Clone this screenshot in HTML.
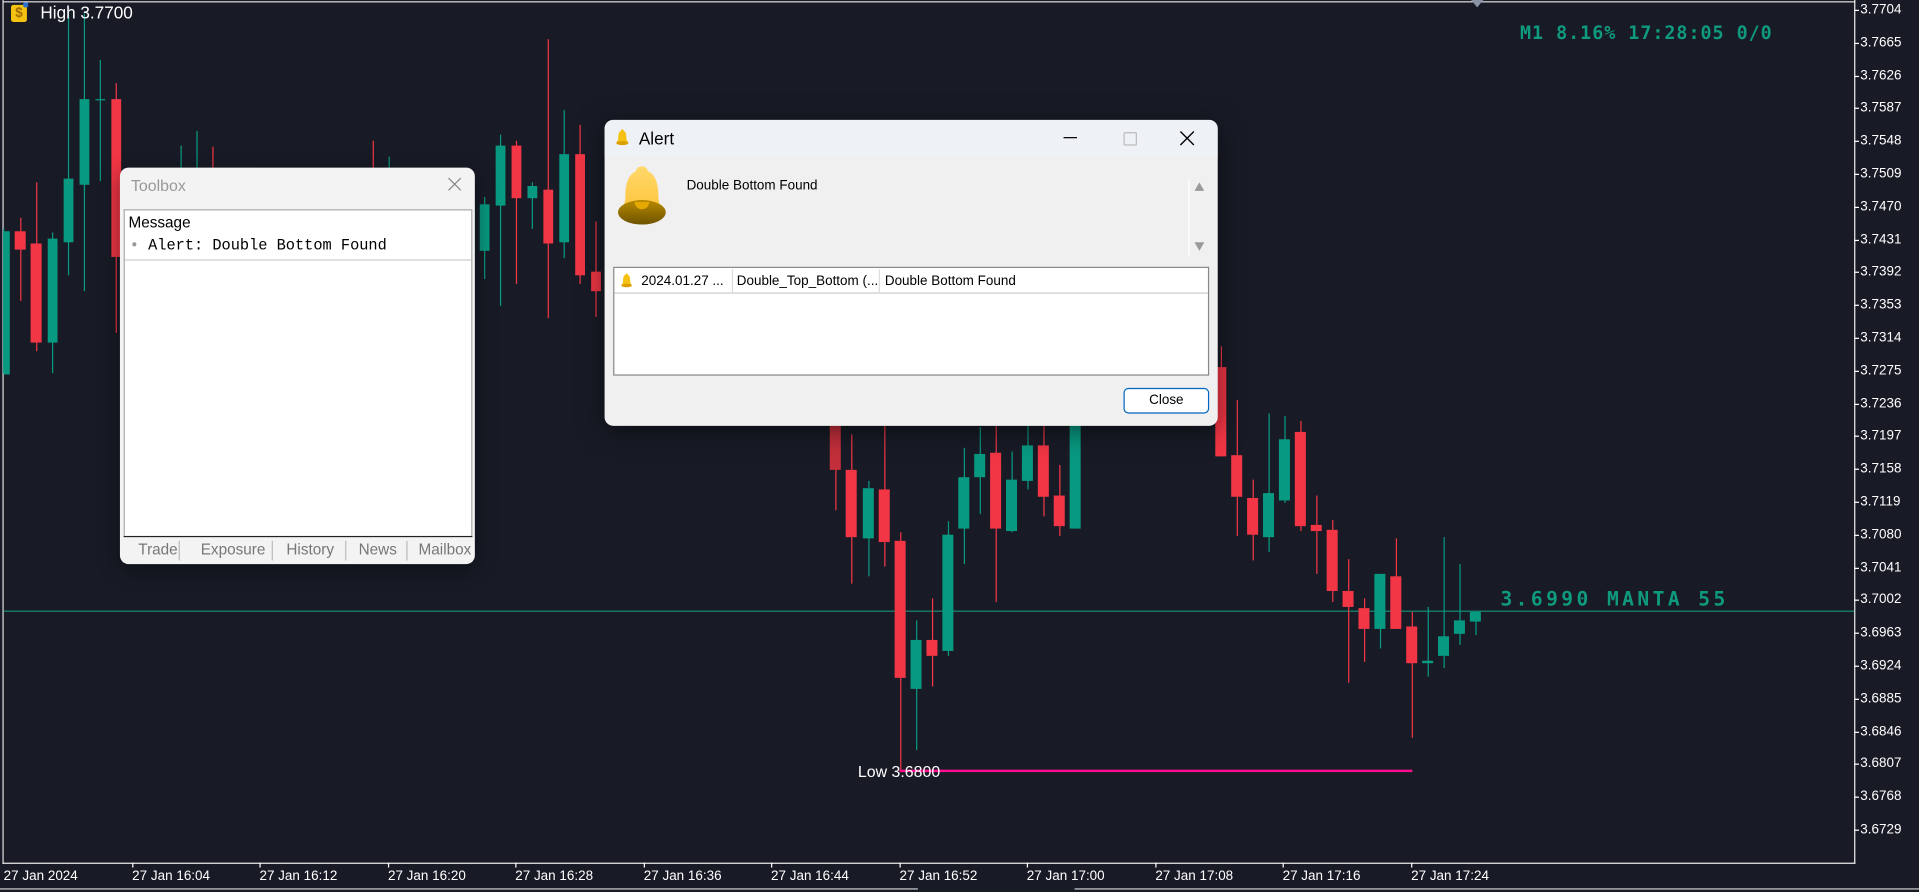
<!DOCTYPE html>
<html><head><meta charset="utf-8">
<style>
html,body{margin:0;padding:0;background:#181b26;overflow:hidden;width:1919px;height:892px}
#w{position:absolute;left:0;top:0;width:1568px;height:729px;transform:scale(1.22385,1.2236);transform-origin:0 0;background:#181b26;font-family:"Liberation Sans",sans-serif}
.abs{position:absolute}
.pl{position:absolute;left:1520px;color:#fff;font-size:11px;line-height:12px}
.tl{position:absolute;top:710px;color:#fff;font-size:11px;white-space:nowrap}
.tab{position:absolute;font-size:12.5px;color:#777}
.sep{position:absolute;width:1px;height:16px;background:#bbb}
</style></head><body>
<div id="w">
<svg class="abs" style="left:0;top:0" width="1568" height="729">
<rect x="2" y="0" width="1" height="706" fill="#ddd"/>
<rect x="2" y="1" width="1514" height="1" fill="#ddd"/>
<rect x="1515" y="0" width="1" height="706" fill="#eee"/>
<rect x="2" y="705" width="1514" height="1" fill="#eee"/>
<rect x="0" y="726" width="750" height="1" fill="#ccc"/>
<rect x="878" y="726" width="690" height="1" fill="#ccc"/>
<polygon points="1202,0 1212,0 1207,6" fill="#8a93a3"/>
<rect x="3" y="499" width="1512" height="1" fill="#178a73"/>
<rect x="735" y="629" width="419" height="2" fill="#ff0f8f"/>
<g fill="#089981">
<rect x="2.5" y="187" width="1" height="118"/><rect x="3" y="189" width="5" height="117"/>
<rect x="42.5" y="190" width="1" height="115"/><rect x="39" y="195" width="8" height="85"/>
<rect x="55.5" y="11" width="1" height="214"/><rect x="52" y="146" width="8" height="52"/>
<rect x="68.5" y="11" width="1" height="227"/><rect x="65" y="81" width="8" height="70"/>
<rect x="81.5" y="49" width="1" height="99"/><rect x="78" y="81" width="8" height="1"/>
<rect x="147.5" y="119" width="1" height="18"/><rect x="160.5" y="107" width="1" height="30"/>
<rect x="317.5" y="128" width="1" height="9"/>
<rect x="395.5" y="161" width="1" height="67"/><rect x="392" y="167" width="8" height="38"/>
<rect x="408.5" y="110" width="1" height="140"/><rect x="405" y="119" width="8" height="49"/>
<rect x="434.5" y="149" width="1" height="38"/><rect x="431" y="152" width="8" height="10"/>
<rect x="460.5" y="90" width="1" height="121"/><rect x="457" y="126" width="8" height="72"/>
<rect x="709.5" y="393" width="1" height="78"/><rect x="705" y="399" width="9" height="41"/>
<rect x="748.5" y="507" width="1" height="106"/><rect x="744" y="523" width="9" height="40"/>
<rect x="774.5" y="426" width="1" height="110"/><rect x="770" y="437" width="9" height="95"/>
<rect x="787.5" y="366" width="1" height="95"/><rect x="783" y="390" width="9" height="42"/>
<rect x="800.5" y="349" width="1" height="71"/><rect x="796" y="371" width="9" height="19"/>
<rect x="826.5" y="369" width="1" height="66"/><rect x="822" y="392" width="9" height="42"/>
<rect x="839.5" y="347" width="1" height="53"/><rect x="835" y="364" width="9" height="29"/>
<rect x="878.5" y="347" width="1" height="85"/><rect x="874" y="347" width="9" height="85"/>
<rect x="1036.5" y="338" width="1" height="113"/><rect x="1032" y="403" width="9" height="36"/>
<rect x="1049.5" y="340" width="1" height="71"/><rect x="1045" y="359" width="9" height="50"/>
<rect x="1127.5" y="489" width="1" height="41"/><rect x="1123" y="469" width="9" height="45"/>
<rect x="1166.5" y="496" width="1" height="57"/><rect x="1162" y="540" width="9" height="2"/>
<rect x="1179.5" y="439" width="1" height="107"/><rect x="1175" y="520" width="9" height="16"/>
<rect x="1192.5" y="461" width="1" height="66"/><rect x="1188" y="507" width="9" height="11"/>
<rect x="1205.5" y="500" width="1" height="19"/><rect x="1201" y="500" width="9" height="8"/>
</g>
<g fill="#f23645">
<rect x="16.5" y="178" width="1" height="68"/><rect x="12" y="189" width="9" height="15"/>
<rect x="29.5" y="149" width="1" height="138"/><rect x="25" y="199" width="9" height="81"/>
<rect x="94.5" y="68" width="1" height="204"/><rect x="91" y="81" width="8" height="129"/>
<rect x="173.5" y="120" width="1" height="17"/><rect x="304.5" y="115" width="1" height="22"/>
<rect x="421.5" y="115" width="1" height="117"/><rect x="418" y="119" width="8" height="43"/>
<rect x="447.5" y="32" width="1" height="228"/><rect x="444" y="155" width="8" height="44"/>
<rect x="473.5" y="102" width="1" height="130"/><rect x="470" y="126" width="8" height="99"/>
<rect x="486.5" y="181" width="1" height="78"/><rect x="483" y="222" width="8" height="16"/>
<rect x="682.5" y="340" width="1" height="77"/><rect x="678" y="340" width="9" height="44" fill="#c42f3c"/>
<rect x="695.5" y="355" width="1" height="122"/><rect x="691" y="384" width="9" height="55"/>
<rect x="722.5" y="347" width="1" height="116"/><rect x="718" y="400" width="9" height="43"/>
<rect x="735.5" y="435" width="1" height="194"/><rect x="731" y="442" width="9" height="112"/>
<rect x="761.5" y="489" width="1" height="72"/><rect x="757" y="523" width="9" height="13"/>
<rect x="813.5" y="347" width="1" height="145"/><rect x="809" y="370" width="9" height="62"/>
<rect x="852.5" y="347" width="1" height="75"/><rect x="848" y="364" width="9" height="42"/>
<rect x="865.5" y="380" width="1" height="58"/><rect x="861" y="405" width="9" height="25"/>
<rect x="997.5" y="283" width="1" height="90"/><rect x="993" y="300" width="9" height="73"/>
<rect x="1010.5" y="327" width="1" height="111"/><rect x="1006" y="372" width="9" height="34"/>
<rect x="1023.5" y="392" width="1" height="66"/><rect x="1019" y="407" width="9" height="30"/>
<rect x="1062.5" y="344" width="1" height="90"/><rect x="1058" y="353" width="9" height="77"/>
<rect x="1075.5" y="405" width="1" height="64"/><rect x="1071" y="429" width="9" height="5"/>
<rect x="1088.5" y="425" width="1" height="67"/><rect x="1084" y="433" width="9" height="50"/>
<rect x="1101.5" y="457" width="1" height="101"/><rect x="1097" y="483" width="9" height="13"/>
<rect x="1114.5" y="489" width="1" height="52"/><rect x="1110" y="497" width="9" height="17"/>
<rect x="1140.5" y="440" width="1" height="74"/><rect x="1136" y="471" width="9" height="43"/>
<rect x="1153.5" y="500" width="1" height="103"/><rect x="1149" y="512" width="9" height="30"/>
</g>
<g fill="#fff">
<rect x="1515" y="8" width="4" height="1"/><rect x="1515" y="35" width="4" height="1"/><rect x="1515" y="62" width="4" height="1"/><rect x="1515" y="88" width="4" height="1"/><rect x="1515" y="115" width="4" height="1"/><rect x="1515" y="142" width="4" height="1"/><rect x="1515" y="169" width="4" height="1"/><rect x="1515" y="196" width="4" height="1"/><rect x="1515" y="222" width="4" height="1"/><rect x="1515" y="249" width="4" height="1"/><rect x="1515" y="276" width="4" height="1"/><rect x="1515" y="303" width="4" height="1"/><rect x="1515" y="330" width="4" height="1"/><rect x="1515" y="356" width="4" height="1"/><rect x="1515" y="383" width="4" height="1"/><rect x="1515" y="410" width="4" height="1"/><rect x="1515" y="437" width="4" height="1"/><rect x="1515" y="464" width="4" height="1"/><rect x="1515" y="490" width="4" height="1"/><rect x="1515" y="517" width="4" height="1"/><rect x="1515" y="544" width="4" height="1"/><rect x="1515" y="571" width="4" height="1"/><rect x="1515" y="598" width="4" height="1"/><rect x="1515" y="624" width="4" height="1"/><rect x="1515" y="651" width="4" height="1"/><rect x="1515" y="678" width="4" height="1"/>
<rect x="108" y="705" width="1" height="4"/><rect x="212" y="705" width="1" height="4"/><rect x="317" y="705" width="1" height="4"/><rect x="421" y="705" width="1" height="4"/><rect x="526" y="705" width="1" height="4"/><rect x="630" y="705" width="1" height="4"/><rect x="735" y="705" width="1" height="4"/><rect x="839" y="705" width="1" height="4"/><rect x="944" y="705" width="1" height="4"/><rect x="1048" y="705" width="1" height="4"/><rect x="1153" y="705" width="1" height="4"/>
</g>
</svg>

<div class="pl" style="top:2px">3.7704</div><div class="pl" style="top:29px">3.7665</div><div class="pl" style="top:56px">3.7626</div><div class="pl" style="top:82px">3.7587</div><div class="pl" style="top:109px">3.7548</div><div class="pl" style="top:136px">3.7509</div><div class="pl" style="top:163px">3.7470</div><div class="pl" style="top:190px">3.7431</div><div class="pl" style="top:216px">3.7392</div><div class="pl" style="top:243px">3.7353</div><div class="pl" style="top:270px">3.7314</div><div class="pl" style="top:297px">3.7275</div><div class="pl" style="top:324px">3.7236</div><div class="pl" style="top:350px">3.7197</div><div class="pl" style="top:377px">3.7158</div><div class="pl" style="top:404px">3.7119</div><div class="pl" style="top:431px">3.7080</div><div class="pl" style="top:458px">3.7041</div><div class="pl" style="top:484px">3.7002</div><div class="pl" style="top:511px">3.6963</div><div class="pl" style="top:538px">3.6924</div><div class="pl" style="top:565px">3.6885</div><div class="pl" style="top:592px">3.6846</div><div class="pl" style="top:618px">3.6807</div><div class="pl" style="top:645px">3.6768</div><div class="pl" style="top:672px">3.6729</div>

<div class="tl" style="left:3px">27 Jan 2024</div><div class="tl" style="left:108px">27 Jan 16:04</div><div class="tl" style="left:212px">27 Jan 16:12</div><div class="tl" style="left:317px">27 Jan 16:20</div><div class="tl" style="left:421px">27 Jan 16:28</div><div class="tl" style="left:526px">27 Jan 16:36</div><div class="tl" style="left:630px">27 Jan 16:44</div><div class="tl" style="left:735px">27 Jan 16:52</div><div class="tl" style="left:839px">27 Jan 17:00</div><div class="tl" style="left:944px">27 Jan 17:08</div><div class="tl" style="left:1048px">27 Jan 17:16</div><div class="tl" style="left:1153px">27 Jan 17:24</div>

<div class="abs" style="left:9px;top:4px;width:13px;height:14px;background:#f5c211;border-radius:2px;color:#a06a00;font-size:11px;font-weight:bold;line-height:14px;text-align:center">$</div>
<div class="abs" style="left:19px;top:2px;width:4px;height:4px;background:#2a6fd0;border-radius:1px"></div>
<div class="abs" style="left:33px;top:2px;color:#fff;font-size:14px">High 3.7700</div>
<div class="abs" style="left:1242px;top:18px;color:#0f9a7e;font-size:15px;font-weight:bold;font-family:'DejaVu Sans Mono',monospace;letter-spacing:0.8px;white-space:nowrap">M1 8.16% 17:28:05 0/0</div>
<div class="abs" style="left:1226px;top:480px;color:#0f9a7e;font-size:16px;font-weight:bold;font-family:'DejaVu Sans Mono',monospace;letter-spacing:2.8px;white-space:nowrap">3.6990 MANTA 55</div>
<div class="abs" style="left:701px;top:623px;color:#fff;font-size:13px;white-space:nowrap">Low 3.6800</div>

<div class="abs" style="left:98px;top:137px;width:290px;height:324px;background:#f3f3f3;border-radius:7px;box-shadow:0 4px 18px rgba(0,0,0,0.45);overflow:hidden">
 <div class="abs" style="left:9px;top:7px;color:#999;font-size:13px">Toolbox</div>
 <svg class="abs" style="left:268px;top:8px" width="11" height="11"><path d="M0.5 0.5L10.5 10.5M10.5 0.5L0.5 10.5" stroke="#888" stroke-width="1"/></svg>
 <div class="abs" style="left:3px;top:34px;width:285px;height:267px;background:#fff;border:1px solid #aaa;border-bottom:none;box-sizing:border-box"></div>
 <div class="abs" style="left:7px;top:38px;font-size:12.5px;color:#000">Message</div>
 <div class="abs" style="left:4px;top:75px;width:283px;height:1px;background:#ccc"></div>
 <div class="abs" style="left:8px;top:57px;font-size:12.5px;color:#000;font-family:'Liberation Mono',monospace;white-space:nowrap"><span style="color:#999">•</span> Alert: Double Bottom Found</div>
 <div class="abs" style="left:3px;top:301px;width:285px;height:1px;background:#222"></div>
 <div class="tab" style="left:15px;top:305px">Trade</div><div class="sep" style="left:48px;top:305px"></div>
 <div class="tab" style="left:66px;top:305px">Exposure</div><div class="sep" style="left:124px;top:305px"></div>
 <div class="tab" style="left:136px;top:305px">History</div><div class="sep" style="left:184px;top:305px"></div>
 <div class="tab" style="left:195px;top:305px">News</div><div class="sep" style="left:234px;top:305px"></div>
 <div class="tab" style="left:244px;top:305px">Mailbox</div>
</div>

<div class="abs" style="left:494px;top:98px;width:501px;height:250px;background:#f0f0f0;border-radius:7px;box-shadow:0 4px 22px rgba(0,0,0,0.5);overflow:hidden">
 <div class="abs" style="left:0;top:0;width:501px;height:30px;background:#eef2f7"></div>
 <svg class="abs" style="left:9px;top:7px" width="11" height="14" viewBox="0 0 40 50"><path d="M20 2c-3 0-4 3-5 5C9 10 8 18 8 28c0 6-3 10-6 13h36c-3-3-6-7-6-13 0-10-1-18-7-21-1-2-2-5-5-5z" fill="#f5c211"/><ellipse cx="20" cy="43" rx="18" ry="6" fill="#d9a000"/></svg>
 <div class="abs" style="left:28px;top:7px;font-size:14px;color:#000">Alert</div>
 <div class="abs" style="left:375px;top:14px;width:11px;height:1px;background:#000"></div>
 <div class="abs" style="left:424px;top:10px;width:9px;height:9px;border:1px solid #bbb;border-radius:1px"></div>
 <svg class="abs" style="left:470px;top:9px" width="12" height="12"><path d="M0.5 0.5L11.5 11.5M11.5 0.5L0.5 11.5" stroke="#000" stroke-width="1.1"/></svg>
 <svg class="abs" style="left:10px;top:37px" width="41" height="51" viewBox="0 0 41 51">
  <defs><linearGradient id="g1" x1="0" y1="0" x2="0" y2="1"><stop offset="0" stop-color="#ffd86a"/><stop offset="1" stop-color="#ffc43a"/></linearGradient>
  <linearGradient id="g2" x1="0" y1="0" x2="0" y2="1"><stop offset="0" stop-color="#b88a00"/><stop offset="1" stop-color="#6e5200"/></linearGradient></defs>
  <path d="M20.5 1c-3 0-4.5 2-5 4C9 8 7 16 7 26c0 6-3 10-5 13.5h37c-2-3.5-5-7.5-5-13.5 0-10-2-18-8.5-21-.5-2-2-4-5-4z" fill="url(#g1)"/>
  <ellipse cx="20.5" cy="38.5" rx="19.5" ry="10" fill="url(#g2)"/>
  <path d="M14.5 30a6 6 0 0 0 12 0z" fill="#e5a800"/>
 </svg>
 <div class="abs" style="left:67px;top:48px;font-size:11px;color:#000">Double Bottom Found</div>
 <div class="abs" style="left:477px;top:48px;width:1px;height:64px;background:#fff"></div>
 <svg class="abs" style="left:481px;top:50px" width="10" height="60"><polygon points="1,8 9,8 5,1" fill="#9a9a9a"/><polygon points="1,50 9,50 5,57" fill="#9a9a9a"/></svg>
 <div class="abs" style="left:7px;top:120px;width:487px;height:89px;background:#fff;border:1px solid #888;box-sizing:border-box"></div>
 <svg class="abs" style="left:13px;top:125px" width="10" height="12" viewBox="0 0 40 50"><path d="M20 2c-3 0-4 3-5 5C9 10 8 18 8 28c0 6-3 10-6 13h36c-3-3-6-7-6-13 0-10-1-18-7-21-1-2-2-5-5-5z" fill="#f5c211"/><ellipse cx="20" cy="43" rx="18" ry="6" fill="#d9a000"/></svg>
 <div class="abs" style="left:30px;top:126px;font-size:11px;color:#000;white-space:nowrap">2024.01.27 ...</div>
 <div class="abs" style="left:104px;top:122px;width:1px;height:19px;background:#ddd"></div>
 <div class="abs" style="left:108px;top:126px;font-size:11px;color:#000;white-space:nowrap">Double_Top_Bottom (...</div>
 <div class="abs" style="left:224px;top:122px;width:1px;height:19px;background:#ddd"></div>
 <div class="abs" style="left:229px;top:126px;font-size:11px;color:#000;white-space:nowrap">Double Bottom Found</div>
 <div class="abs" style="left:8px;top:141px;width:485px;height:1px;background:#ccc"></div>
 <div class="abs" style="left:424px;top:219px;width:70px;height:21px;background:#fff;border:1px solid #0067c0;border-radius:4px;box-sizing:border-box;font-size:11px;text-align:center;line-height:19px;color:#000">Close</div>
</div>
</div>
</body></html>
